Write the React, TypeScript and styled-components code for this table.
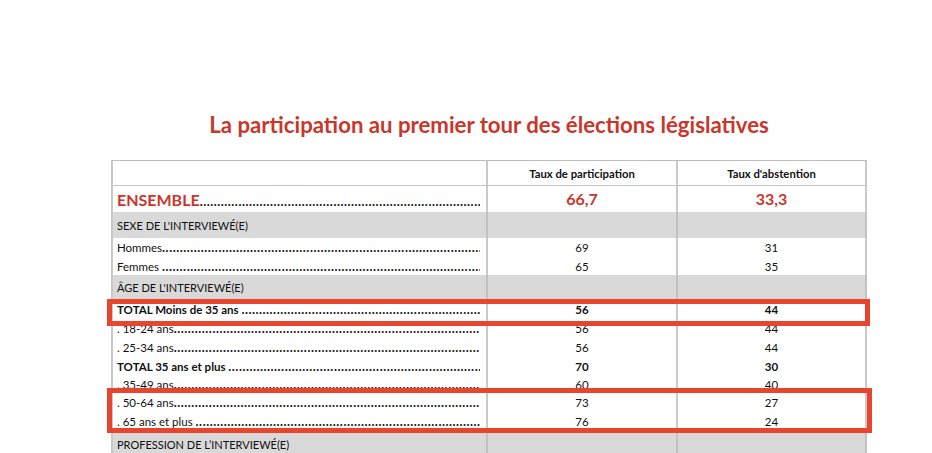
import React from "react";
import styled, { createGlobalStyle, css } from "styled-components";

const Global = createGlobalStyle`
  html, body { margin: 0; padding: 0; background: #ffffff; }
  body { font-family: "Lato", "Open Sans", "Liberation Sans", sans-serif; color: #111; }
`;

const Page = styled.div`
  width: 932px;
  height: 453px;
  overflow: hidden;
  padding-top: 110px;
  box-sizing: border-box;
`;

const Title = styled.h1`
  margin: 0 0 20px 111px;
  width: 756px;
  height: 30px;
  line-height: 30px;
  text-align: center;
  font-size: 22.2px;
  font-weight: 700;
  color: #c8372c;
  letter-spacing: 0;
`;

const TableWrap = styled.div`
  position: relative;
  margin-left: 111px;
  width: 756px;
`;

const Table = styled.div`
  border-left: 2px solid #c9c9c9;
  border-top: 1px solid #bdbdbd;
`;

type Variant = "header" | "total" | "section" | "item";

const Row = styled.div<{ $variant: Variant; $h: number }>`
  display: grid;
  grid-template-columns: 375px 190px 189px;
  height: ${(p) => p.$h}px;
  background: ${(p) => (p.$variant === "section" ? "#d9d9d9" : "#ffffff")};
  ${(p) =>
    p.$variant === "header" &&
    css`
      border-bottom: 1px solid #c4c4c4;
      box-sizing: border-box;
    `}
`;

const Cell = styled.div<{ $variant: Variant }>`
  border-right: 2px solid ${(p) => (p.$variant === "section" ? "#c2c2c2" : "#cacaca")};
  display: flex;
  align-items: center;
  justify-content: center;
  font-size: 11.5px;
  ${(p) =>
    p.$variant === "header" &&
    css`
      font-weight: 700;
      font-size: 11.3px;
    `}
  ${(p) =>
    p.$variant === "total" &&
    css`
      font-weight: 700;
      font-size: 16px;
      color: #c8372c;
      padding-bottom: 2px;
    `}
`;

const Num = styled.span<{ $bold?: boolean }>`
  font-weight: ${(p) => (p.$bold ? 700 : 400)};
`;

const LabelCell = styled.div<{ $variant: Variant }>`
  border-right: 2px solid ${(p) => (p.$variant === "section" ? "#c2c2c2" : "#cacaca")};
  display: flex;
  align-items: center;
  padding: 0 6px 0 4px;
  min-width: 0;
  font-size: 11.5px;
  white-space: pre;
  overflow: hidden;
  ${(p) =>
    p.$variant === "total" &&
    css`
      align-items: baseline;
      padding-top: 4px;
      box-sizing: border-box;
    `}
`;

const Label = styled.span<{ $bold?: boolean; $big?: boolean }>`
  flex: none;
  font-weight: ${(p) => (p.$bold || p.$big ? 700 : 400)};
  ${(p) =>
    p.$big &&
    css`
      font-size: 16px;
      color: #c8372c;
    `}
`;

const SectionLabel = styled.span`
  font-size: 11px;
`;

const Leader = styled.span`
  flex: 1;
  overflow: hidden;
  white-space: nowrap;
  letter-spacing: 0.55px;
  font-size: 12.5px;
  font-weight: 700;
  color: #151515;
  &::after {
    content: "${".".repeat(200)}";
  }
`;

const Highlight = styled.div<{ $top: number; $height: number; $width: number }>`
  position: absolute;
  left: -4px;
  top: ${(p) => p.$top}px;
  width: ${(p) => p.$width}px;
  height: ${(p) => p.$height}px;
  border: 5px solid #e8452f;
  box-sizing: border-box;
  pointer-events: none;
`;

type Item = {
  label: string;
  a?: string;
  b?: string;
  variant: Variant;
  h: number;
  bold?: boolean;
};

const rows: Item[] = [
  { label: "", a: "Taux de participation", b: "Taux d'abstention", variant: "header", h: 25 },
  { label: "ENSEMBLE", a: "66,7", b: "33,3", variant: "total", h: 26 },
  { label: "SEXE DE L'INTERVIEWÉ(E)", variant: "section", h: 26 },
  { label: "Hommes", a: "69", b: "31", variant: "item", h: 19 },
  { label: "Femmes ", a: "65", b: "35", variant: "item", h: 18 },
  { label: "ÂGE DE L'INTERVIEWÉ(E)", variant: "section", h: 25 },
  { label: "TOTAL Moins de 35 ans ", a: "56", b: "44", variant: "item", h: 19, bold: true },
  { label: ". 18-24 ans", a: "56", b: "44", variant: "item", h: 19 },
  { label: ". 25-34 ans", a: "56", b: "44", variant: "item", h: 19 },
  { label: "TOTAL 35 ans et plus ", a: "70", b: "30", variant: "item", h: 18, bold: true },
  { label: ". 35-49 ans", a: "60", b: "40", variant: "item", h: 18 },
  { label: ". 50-64 ans", a: "73", b: "27", variant: "item", h: 19 },
  { label: ". 65 ans et plus ", a: "76", b: "24", variant: "item", h: 19 },
  { label: "PROFESSION DE L’INTERVIEWÉ(E)", variant: "section", h: 26 },
];

export default function App() {
  return (
    <>
      <Global />
      <Page>
        <Title>La participation au premier tour des élections législatives</Title>
        <TableWrap>
          <Table>
            {rows.map((r, i) => (
              <Row key={i} $variant={r.variant} $h={r.h}>
                <LabelCell $variant={r.variant}>
                  {r.variant === "section" ? (
                    <SectionLabel>{r.label}</SectionLabel>
                  ) : r.variant === "header" ? null : (
                    <>
                      <Label $bold={r.bold} $big={r.variant === "total"}>
                        {r.label}
                      </Label>
                      <Leader />
                    </>
                  )}
                </LabelCell>
                <Cell $variant={r.variant}>
                  {r.a && <Num $bold={r.bold || r.variant !== "item"}>{r.a}</Num>}
                </Cell>
                <Cell $variant={r.variant}>
                  {r.b && <Num $bold={r.bold || r.variant !== "item"}>{r.b}</Num>}
                </Cell>
              </Row>
            ))}
          </Table>
          <Highlight $top={139} $height={27} $width={763} />
          <Highlight $top={228} $height={45} $width={765} />
        </TableWrap>
      </Page>
    </>
  );
}
